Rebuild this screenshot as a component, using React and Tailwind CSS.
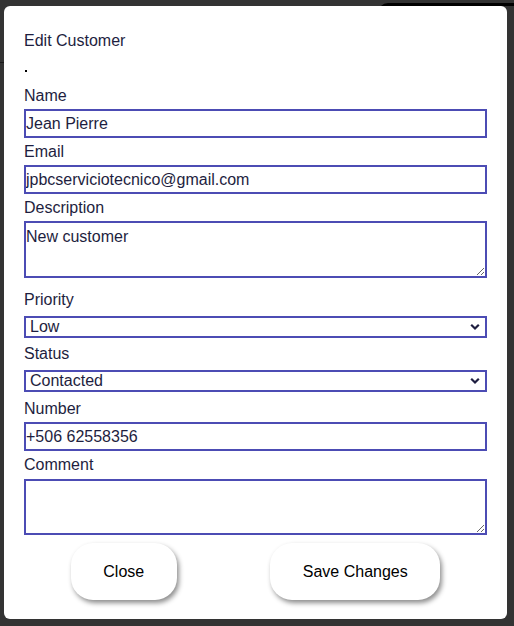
import React from "react";

function Label({ children, className = "" }) {
  return (
    <div className={"text-[16px] leading-[18px] text-[#1e1e40] " + className}>
      {children}
    </div>
  );
}

function Chevron() {
  return (
    <svg
      className="pointer-events-none absolute right-[7px] top-1/2 -translate-y-1/2"
      width="10"
      height="7"
      viewBox="0 0 10 7"
    >
      <polyline
        points="1.2,1.2 5,5 8.8,1.2"
        fill="none"
        stroke="#1e1e40"
        strokeWidth="2.2"
      />
    </svg>
  );
}

function Select({ value, className = "" }) {
  return (
    <div className={"relative " + className}>
      <select
        defaultValue={value}
        className="block h-[22px] w-full appearance-none border-2 border-[#4c4cb4] bg-white pl-[4px] text-[16px] leading-[18px] text-[#1e1e40] outline-none"
      >
        <option value={value}>{value}</option>
      </select>
      <Chevron />
    </div>
  );
}

export default function App() {
  return (
    <div className="relative min-h-[626px] overflow-hidden bg-[#333333] pl-[4px] pt-[6px] font-['Liberation_Sans',Arial,sans-serif]">
      <div className="absolute left-[378px] top-[3px] h-[40px] w-[160px] rounded-[10px] border-t-[3px] border-black" />
      <div className="absolute left-[0px] top-[62px] h-[1px] w-[4px] bg-[#1a1a1a]" />
      <div className="relative flex h-[613px] w-[503px] flex-col rounded-[6px] bg-white px-[20px] pt-[26px]">
        <div className="text-[16px] leading-[18px] text-[#1e1e40]">Edit Customer</div>
        <div className="ml-[1px] mt-[20px] h-[2px] w-[2px] bg-black" />

        <Label className="mt-[15px]">Name</Label>
        <input
          defaultValue="Jean Pierre"
          className="mt-[4px] block h-[29px] w-full border-2 border-[#4c4cb4] px-0 pt-[1px] text-[16px] text-[#1e1e40] outline-none"
        />

        <Label className="mt-[5px]">Email</Label>
        <input
          defaultValue="jpbcserviciotecnico@gmail.com"
          className="mt-[4px] block h-[29px] w-full border-2 border-[#4c4cb4] px-0 pt-[1px] text-[16px] text-[#1e1e40] outline-none"
        />

        <Label className="mt-[5px]">Description</Label>
        <textarea
          defaultValue="New customer"
          className="mt-[4px] block h-[57px] w-full resize-y border-2 border-[#4c4cb4] px-0 pt-[5px] text-[16px] leading-[18px] text-[#1e1e40] outline-none"
        />

        <Label className="mt-[13px]">Priority</Label>
        <Select value="Low" className="mt-[7px]" />

        <Label className="mt-[7px]">Status</Label>
        <Select value="Contacted" className="mt-[7px]" />

        <Label className="mt-[8px]">Number</Label>
        <input
          defaultValue="+506 62558356"
          className="mt-[4px] block h-[29px] w-full border-2 border-[#4c4cb4] px-0 pt-[1px] text-[16px] text-[#1e1e40] outline-none"
        />

        <Label className="mt-[5px]">Comment</Label>
        <textarea
          className="mt-[5px] block h-[56px] w-full resize-y border-2 border-[#4c4cb4] px-0 pt-[5px] text-[16px] leading-[18px] text-[#1e1e40] outline-none"
        />

        <div className="mt-[8px] flex justify-around">
          <button className="h-[57px] w-[106px] rounded-[22px] bg-white text-[16px] text-black shadow-[2px_3px_5px_rgba(0,0,0,0.45)]">
            Close
          </button>
          <button className="h-[57px] w-[170px] rounded-[22px] bg-white text-[16px] text-black shadow-[2px_3px_5px_rgba(0,0,0,0.45)]">
            Save Changes
          </button>
        </div>
      </div>
    </div>
  );
}
